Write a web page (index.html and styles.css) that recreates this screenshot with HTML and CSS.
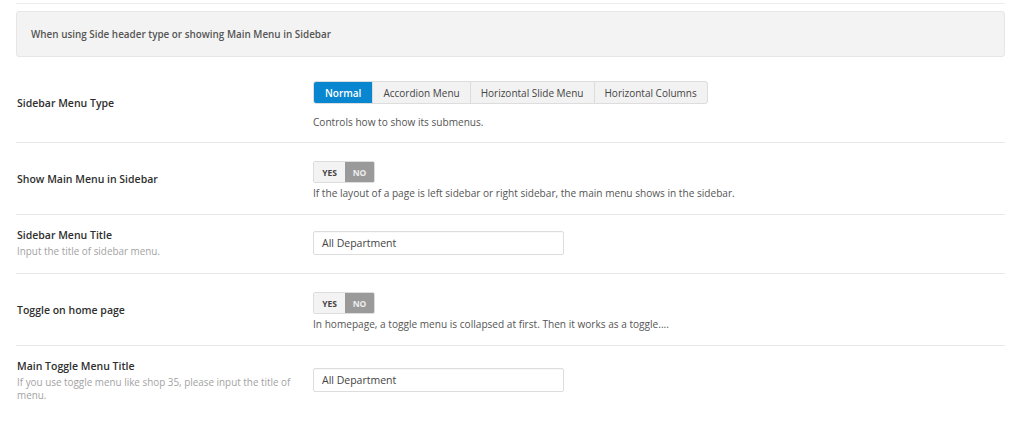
FILE: index.html
```html
<!DOCTYPE html>
<html>
<head>
<meta charset="utf-8">
<link rel="stylesheet" href="styles.css">
</head>
<body>
<div class="page">
  <div class="section-head">When using Side header type or showing Main Menu in Sidebar</div>

  <div class="row row-first">
    <div class="label"><div class="title">Sidebar Menu Type</div></div>
    <div class="control">
      <div class="btn-group">
        <span class="btn active">Normal</span>
        <span class="btn">Accordion Menu</span>
        <span class="btn">Horizontal Slide Menu</span>
        <span class="btn">Horizontal Columns</span>
      </div>
      <div class="desc desc-wide">Controls how to show its submenus.</div>
    </div>
  </div>

  <div class="row row-toggle">
    <div class="label"><div class="title">Show Main Menu in Sidebar</div></div>
    <div class="control">
      <div class="toggle"><span class="yes">YES</span><span class="no">NO</span></div>
      <div class="desc">If the layout of a page is left sidebar or right sidebar, the main menu shows in the sidebar.</div>
    </div>
  </div>

  <div class="row row-input">
    <div class="label">
      <div class="title">Sidebar Menu Title</div>
      <div class="sub">Input the title of sidebar menu.</div>
    </div>
    <div class="control">
      <div class="input">All Department</div>
    </div>
  </div>

  <div class="row row-toggle">
    <div class="label"><div class="title">Toggle on home page</div></div>
    <div class="control">
      <div class="toggle"><span class="yes">YES</span><span class="no">NO</span></div>
      <div class="desc">In homepage, a toggle menu is collapsed at first. Then it works as a toggle....</div>
    </div>
  </div>

  <div class="row row-input last">
    <div class="label">
      <div class="title">Main Toggle Menu Title</div>
      <div class="sub">If you use toggle menu like shop 35, please input the title of menu.</div>
    </div>
    <div class="control">
      <div class="input">All Department</div>
    </div>
  </div>
</div>
</body>
</html>
```

FILE: styles.css
```css
* { box-sizing: border-box; }
body {
  margin: 0;
  background: #fff;
  font-family: "Open Sans", "Noto Sans", Arial, sans-serif;
  color: #333;
}
.page {
  margin: 3px 19px 0 16px;
  border-top: 1px solid #ececec;
  padding-top: 7px;
}
.section-head {
  background: #f3f3f3;
  border: 1px solid #e6e6e6;
  border-radius: 3px;
  height: 46px;
  padding: 0 14px;
  display: flex;
  align-items: center;
  font-size: 9.9px;
  font-weight: 600;
  color: #555;
}
.row {
  display: flex;
  align-items: center;
  border-bottom: 1px solid #e8e8e8;
}
.row-first { padding: 24px 0 12px; }
.row-first .label { padding-bottom: 6px; }
.row-toggle { padding: 18px 0 13px; }
.row-toggle .label { padding-bottom: 4px; }
.row-input { padding: 12px 0 15px; }
.row.last { border-bottom: none; padding-top: 12px; }
.label {
  width: 297px;
  padding-left: 1px;
  flex-shrink: 0;
}
.title {
  font-size: 10.5px;
  font-weight: 600;
  color: #2f2f2f;
  line-height: 16px;
}
.sub {
  width: 290px;
  font-size: 9.9px;
  color: #a3a3a3;
  line-height: 13px;
  margin-top: 2px;
}
.control {
  flex: 1;
}
.btn-group {
  display: flex;
  width: max-content;
  height: 23px;
  border: 1px solid #ddd;
  border-radius: 3px;
  overflow: hidden;
  background: #f2f2f2;
}
.btn {
  display: flex;
  align-items: center;
  padding: 0 10px;
  font-size: 10px;
  color: #444;
  border-left: 1px solid #dcdcdc;
}
.btn:first-child { border-left: none; }
.btn.active {
  background: #0886cf;
  color: #fff;
  font-weight: 600;
  padding: 0 11px;
}
.desc {
  font-size: 10.1px;
  color: #555;
  line-height: 16px;
  margin-top: 2px;
}
.desc-wide { margin-top: 10px; }
.toggle {
  display: flex;
  width: max-content;
  height: 22px;
  border: 1px solid #ddd;
  border-radius: 2px;
  overflow: hidden;
  font-size: 8.5px;
  font-weight: 700;
}
.toggle .yes {
  width: 31px;
  background: #f3f3f3;
  color: #444;
  display: flex;
  align-items: center;
  justify-content: center;
}
.toggle .no {
  width: 29px;
  background: #9a9a9a;
  color: #eee;
  display: flex;
  align-items: center;
  justify-content: center;
}
.input {
  width: 251px;
  height: 24px;
  border: 1px solid #ddd;
  border-radius: 2px;
  font-size: 10.5px;
  color: #444;
  padding: 0 8px;
  display: flex;
  align-items: center;
  box-shadow: inset 0 1px 1px rgba(0,0,0,0.03);
}
```
